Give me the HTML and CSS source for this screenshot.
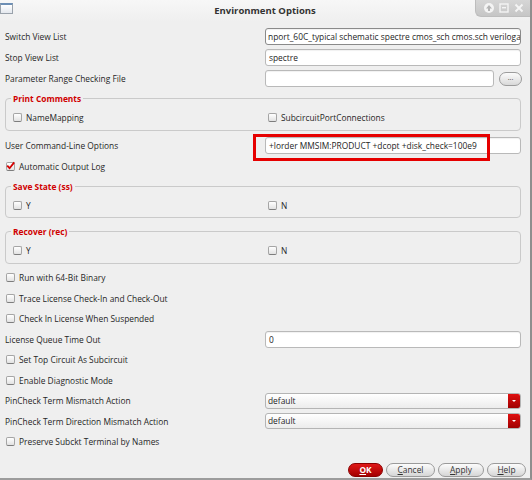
FILE: index.html
```html
<!DOCTYPE html>
<html>
<head>
<meta charset="utf-8">
<title>Environment Options</title>
<link rel="stylesheet" href="styles.css">
</head>
<body>
<div class="window">
  <div class="titlebar">
    <div class="app-icon"></div>
    <div class="title">Environment Options</div>
    <div class="wm-buttons">
      <svg width="12" height="12" viewBox="0 0 12 12"><circle cx="6" cy="6" r="5" fill="#f4f4f4"/><path d="M6 3 L9 6.5 H7 V9 H5 V6.5 H3 Z" fill="#b4b4b4"/></svg>
      <svg width="12" height="12" viewBox="0 0 12 12"><rect x="2" y="2" width="8" height="8" fill="none" stroke="#f4f4f4" stroke-width="1.4"/><rect x="4" y="5" width="4" height="1.4" fill="#f4f4f4"/></svg>
      <svg width="12" height="12" viewBox="0 0 12 12"><path d="M2.5 2.5 L9.5 9.5 M9.5 2.5 L2.5 9.5" stroke="#f4f4f4" stroke-width="2"/></svg>
    </div>
  </div>

  <div class="content">
    <div class="row">
      <span class="label">Switch View List</span>
      <div class="input focus">nport_60C_typical schematic spectre cmos_sch cmos.sch veriloga<span class="caret"></span></div>
    </div>
    <div class="row">
      <span class="label">Stop View List</span>
      <div class="input">spectre</div>
    </div>
    <div class="row">
      <span class="label">Parameter Range Checking File</span>
      <div class="input"></div>
      <div class="dots-btn">...</div>
    </div>

    <fieldset class="group">
      <legend>Print Comments</legend>
      <div class="group-row">
        <label class="check"><span class="box"></span>NameMapping</label>
        <label class="check"><span class="box"></span>SubcircuitPortConnections</label>
      </div>
    </fieldset>

    <div class="row highlight-row">
      <span class="label">User Command-Line Options</span>
      <div class="input">+lorder MMSIM:PRODUCT +dcopt +disk_check=100e9</div>
      <div class="highlight"></div>
    </div>
    <div class="row">
      <label class="check"><span class="box checked"><svg width="9" height="9" viewBox="0 0 9 9"><path d="M1.2 4.6 L3.6 7.2 L8.2 1.4" fill="none" stroke="#d40000" stroke-width="1.8"/></svg></span>Automatic Output Log</label>
    </div>

    <fieldset class="group">
      <legend>Save State (ss)</legend>
      <div class="group-row">
        <label class="check"><span class="box"></span>Y</label>
        <label class="check"><span class="box"></span>N</label>
      </div>
    </fieldset>

    <fieldset class="group">
      <legend>Recover (rec)</legend>
      <div class="group-row">
        <label class="check"><span class="box"></span>Y</label>
        <label class="check"><span class="box"></span>N</label>
      </div>
    </fieldset>

    <div class="row tight first-tight">
      <label class="check"><span class="box"></span>Run with 64-Bit Binary</label>
    </div>
    <div class="row tight">
      <label class="check"><span class="box"></span>Trace License Check-In and Check-Out</label>
    </div>
    <div class="row tight">
      <label class="check"><span class="box"></span>Check In License When Suspended</label>
    </div>
    <div class="row tight">
      <span class="label">License Queue Time Out</span>
      <div class="input">0</div>
    </div>
    <div class="row tight">
      <label class="check"><span class="box"></span>Set Top Circuit As Subcircuit</label>
    </div>
    <div class="row tight">
      <label class="check"><span class="box"></span>Enable Diagnostic Mode</label>
    </div>
    <div class="row tight">
      <span class="label">PinCheck Term Mismatch Action</span>
      <div class="combo"><span class="combo-text">default</span><span class="combo-btn"></span></div>
    </div>
    <div class="row tight">
      <span class="label">PinCheck Term Direction Mismatch Action</span>
      <div class="combo"><span class="combo-text">default</span><span class="combo-btn"></span></div>
    </div>
    <div class="row tight">
      <label class="check"><span class="box"></span>Preserve Subckt Terminal by Names</label>
    </div>
  </div>

  <div class="actions">
    <div class="btn ok"><u>O</u>K</div>
    <div class="btn cancel"><u>C</u>ancel</div>
    <div class="btn apply"><u>A</u>pply</div>
    <div class="btn help"><u>H</u>elp</div>
  </div>
</div>
</body>
</html>
```

FILE: styles.css
```css
html, body {
  margin: 0;
  padding: 0;
}

body {
  background: #efefef;
  font-family: "Open Sans", "Noto Sans", sans-serif;
  font-size: 8.4px;
  color: #262626;
}

.window {
  width: 532px;
  height: 480px;
  box-sizing: border-box;
  border-right: 2px solid #8e8e8e;
  border-bottom: 2px solid #9c9c9c;
  display: flex;
  flex-direction: column;
  background: #efefef;
  overflow: hidden;
}

/* Title bar */
.titlebar {
  height: 22px;
  flex: none;
  display: flex;
  align-items: flex-start;
  background: linear-gradient(#f7f7f7, #efefef);
}

.app-icon {
  width: 13px;
  height: 11px;
  margin-top: 3px;
  box-sizing: border-box;
  border: 1px solid #9aa2ab;
  border-top: 2px solid #6d8fb5;
  background: linear-gradient(#ffffff, #e4e8ee);
}

.title {
  flex: 1;
  text-align: center;
  font-weight: bold;
  font-size: 9.5px;
  color: #333;
  line-height: 22px;
  padding-left: 42px;
}

.wm-buttons {
  width: 55px;
  height: 17px;
  box-sizing: border-box;
  display: flex;
  align-items: center;
  justify-content: space-around;
  padding: 0 3px 0 5px;
  background: linear-gradient(#d6d6d6, #c6c6c6);
  border-bottom-left-radius: 6px;
  border-left: 1px solid #bdbdbd;
  border-bottom: 1px solid #bdbdbd;
}

/* Content */
.content {
  padding-top: 4px;
}

.row {
  height: 21px;
  display: flex;
  align-items: center;
  padding: 0 9px 0 5px;
  box-sizing: border-box;
}

.row.tight {
  height: 20.5px;
}

.row.first-tight {
  margin-top: 4px;
}

.label {
  width: 260px;
  flex: none;
  white-space: nowrap;
}

.input {
  flex: 1;
  min-width: 0;
  height: 17px;
  box-sizing: border-box;
  border: 1px solid #b9b9b9;
  border-radius: 3px;
  background: #ffffff;
  box-shadow: inset 0 1px 1px rgba(0, 0, 0, 0.06);
  padding: 0 3px;
  line-height: 15px;
  white-space: nowrap;
  overflow: hidden;
  color: #1e1e1e;
}

.input.focus {
  border-color: #8a8a8a;
  display: flex;
  align-items: center;
  padding-left: 2px;
}

.caret {
  display: inline-block;
  width: 1px;
  height: 11px;
  background: #000;
  margin-left: 1px;
}

.dots-btn {
  flex: none;
  width: 23px;
  height: 14px;
  margin-left: 5px;
  margin-right: -1px;
  box-sizing: border-box;
  border: 1px solid #9c9c9c;
  border-radius: 7px;
  background: linear-gradient(#fbfbfb, #d9d9d9);
  text-align: center;
  line-height: 9px;
  font-size: 7px;
  color: #444;
}

/* Groups */
.group {
  margin: 4px 9px 0 5px;
  padding: 3.5px 5px 2px 5px;
  border: 1px solid #cacaca;
  border-radius: 4px;
  min-width: 0;
}

.group + .group {
  margin-top: 8px;
}

.group legend {
  color: #d00000;
  font-weight: bold;
  padding: 0 2px;
  line-height: 11px;
}

.group-row {
  height: 20px;
  display: grid;
  grid-template-columns: 255px 1fr;
  align-items: center;
}

.group-row .check {
  padding-left: 2px;
}

.check {
  display: flex;
  align-items: center;
  gap: 4px;
  padding-left: 1px;
  white-space: nowrap;
}

.box {
  width: 9px;
  height: 9px;
  box-sizing: border-box;
  flex: none;
  border: 1px solid #a5a5a5;
  border-bottom-color: #7d7d7d;
  border-radius: 2px;
  background: linear-gradient(#ffffff, #e2e2e2);
  position: relative;
}

.box svg {
  position: absolute;
  left: -1px;
  top: -2px;
}

/* Highlight */
.highlight-row {
  position: relative;
  margin-top: 4px;
}

.highlight {
  position: absolute;
  left: 253px;
  top: -1px;
  width: 237px;
  height: 27px;
  box-sizing: border-box;
  border: 3px solid #e60000;
}

/* Combo */
.combo {
  flex: 1;
  height: 16px;
  box-sizing: border-box;
  border: 1px solid #b4b4b4;
  border-radius: 3px;
  background: linear-gradient(#ffffff, #ececec);
  display: flex;
  align-items: stretch;
  overflow: hidden;
}

.combo-text {
  flex: 1;
  padding-left: 2px;
  line-height: 14px;
}

.combo-btn {
  width: 12px;
  flex: none;
  background: linear-gradient(#e01010, #a00000);
  position: relative;
}

.combo-btn::after {
  content: "";
  position: absolute;
  left: 4px;
  top: 6px;
  border-left: 2px solid transparent;
  border-right: 2px solid transparent;
  border-top: 2px solid #ffffff;
}

/* Actions */
.actions {
  margin-top: auto;
  display: flex;
  justify-content: flex-end;
  gap: 3px;
  padding: 0 4px 1px 0;
}

.btn {
  height: 14px;
  box-sizing: border-box;
  border: 1px solid #9a9a9a;
  border-radius: 7px;
  background: linear-gradient(#fcfcfc, #d6d6d6);
  text-align: center;
  line-height: 12px;
  font-size: 8.4px;
  color: #333;
}

.btn u {
  text-underline-offset: 1px;
}

.btn.ok {
  width: 35px;
  background: linear-gradient(#e01818, #a40000);
  border-color: #8a0000;
  color: #ffffff;
  font-weight: bold;
}

.btn.cancel { width: 49px; }
.btn.apply { width: 46px; }
.btn.help { width: 39px; }
```
